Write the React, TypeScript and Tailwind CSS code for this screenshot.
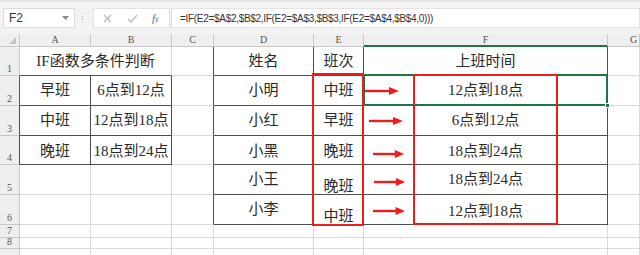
import React from "react";

function Arrow({ className }: { className: string }) {
  return (
    <svg className={"absolute h-[10px] " + className} viewBox="0 0 34 10" preserveAspectRatio="none">
      <line x1={0} y1={5} x2={26} y2={5} stroke="#ee1c1c" strokeWidth={2.4} />
      <polygon points="24,1 34,5 24,9" fill="#ee1c1c" />
    </svg>
  );
}

const cell =
  "flex items-center justify-center border-r border-b border-[#dadada] text-[15px] text-[#2a2a2a] leading-none";
const hdr =
  "flex items-center justify-center border-r border-b border-[#c9c9c9] bg-[#efefef] text-[10px] text-[#555] leading-none font-['Liberation_Serif',serif]";
const rh =
  "flex items-end justify-center pb-[1px] border-r border-b border-[#c9c9c9] bg-[#efefef] text-[10px] text-[#555] leading-none font-['Liberation_Serif',serif]";
const DR = " border-r-[#4d4d4d]";
const DB = " border-b-[#4d4d4d]";
const DRB = " border-r-[#4d4d4d] border-b-[#4d4d4d]";

export default function App() {
  return (
    <div className="relative w-[640px] h-[255px] overflow-hidden bg-white">
      {/* toolbar */}
      <div className="flex h-[34px] items-start bg-[#f3f3f3] border-t-[2px] border-[#e6e6e6] pt-[6px] pl-[3px]">
        <div className="flex h-[20px] w-[72px] items-center justify-between border border-[#dcdcdc] bg-white px-[5px] text-[12px] text-[#333] font-['Liberation_Sans',sans-serif]">
          <span>F2</span>
          <svg width="7" height="4" viewBox="0 0 7 4">
            <polygon points="0,0 7,0 3.5,4" fill="#8a8a8a" />
          </svg>
        </div>
        <div className="ml-[7px] mr-[10px] flex h-[20px] flex-col items-center justify-center gap-[2px]">
          <div className="h-[1px] w-[1px] bg-[#b0b0b0]" />
          <div className="h-[1px] w-[1px] bg-[#b0b0b0]" />
          <div className="h-[1px] w-[1px] bg-[#b0b0b0]" />
          <div className="h-[1px] w-[1px] bg-[#b0b0b0]" />
        </div>
        <div className="flex h-[20px] w-[77px] items-center border border-[#e2e2e2] bg-white pl-[8px]">
          <svg width="9" height="9" viewBox="0 0 9 9" className="ml-[1px]">
            <path d="M1 1 L8 8 M8 1 L1 8" stroke="#b8b8b8" strokeWidth="1.2" />
          </svg>
          <svg width="11" height="9" viewBox="0 0 11 9" className="ml-[15px]">
            <path d="M1 5 L4 8 L10 1" stroke="#b8b8b8" strokeWidth="1.2" fill="none" />
          </svg>
          <span className="ml-[14px] text-[11px] italic text-[#666] font-['Liberation_Serif',serif]">
            f<span className="text-[8px]">x</span>
          </span>
        </div>
        <div className="ml-[1px] flex h-[20px] flex-1 items-center border border-[#e2e2e2] bg-white pl-[8px] text-[10px] tracking-[-0.3px] text-[#333] font-['Liberation_Sans',sans-serif]">
          =IF(E2=$A$2,$B$2,IF(E2=$A$3,$B$3,IF(E2=$A$4,$B$4,0)))
        </div>
      </div>

      {/* sheet grid */}
      <div className="grid grid-cols-[20px_71px_81px_42px_100px_50px_244px_1fr] grid-rows-[13px_29px_30px_30px_29px_30px_30px_13px_11px_20px] font-['Liberation_Serif','Noto_Sans_CJK_SC',serif]">
        {/* header row */}
        <div className={hdr + " relative"}>
          <svg className="absolute right-[3px] bottom-[2px]" width="7" height="7" viewBox="0 0 7 7">
            <polygon points="7,0 7,7 0,7" fill="#c4c4c4" />
          </svg>
        </div>
        <div className={hdr}>A</div>
        <div className={hdr}>B</div>
        <div className={hdr}>C</div>
        <div className={hdr}>D</div>
        <div className={hdr}>E</div>
        <div className={hdr + " bg-[#d6d6d6] border-b-[2px] border-b-[#217346]"}>F</div>
        <div className={hdr + " justify-start pl-[22px]"}>G</div>

        {/* row 1 */}
        <div className={rh}>1</div>
        <div className={cell + " col-span-2" + DB}>IF函数多条件判断</div>
        <div className={cell + DR}></div>
        <div className={cell + DRB}>姓名</div>
        <div className={cell + DRB}>班次</div>
        <div className={cell + DRB}>上班时间</div>
        <div className={cell}></div>

        {/* row 2 */}
        <div className={rh + " bg-[#d6d6d6] border-r-[#217346]"}>2</div>
        <div className={cell + DRB}>早班</div>
        <div className={cell + DRB}>6点到12点</div>
        <div className={cell + DR}></div>
        <div className={cell + DRB}>小明</div>
        <div className={cell + DRB}>中班</div>
        <div className={cell + DRB + " relative"}>
          12点到18点
          <Arrow className="left-[1px] top-[10px] w-[34px]" />
        </div>
        <div className={cell}></div>

        {/* row 3 */}
        <div className={rh + DR}>3</div>
        <div className={cell + DRB}>中班</div>
        <div className={cell + DRB}>12点到18点</div>
        <div className={cell + DR}></div>
        <div className={cell + DRB}>小红</div>
        <div className={cell + DRB}>早班</div>
        <div className={cell + DRB + " relative"}>
          6点到12点
          <Arrow className="left-[5px] top-[10px] w-[34px]" />
        </div>
        <div className={cell}></div>

        {/* row 4 */}
        <div className={rh + DR}>4</div>
        <div className={cell + DRB + " pt-[3px]"}>晚班</div>
        <div className={cell + DRB + " pt-[3px]"}>18点到24点</div>
        <div className={cell + DR}></div>
        <div className={cell + DRB + " pt-[3px]"}>小黑</div>
        <div className={cell + DRB + " pt-[3px]"}>晚班</div>
        <div className={cell + DRB + " relative pt-[3px]"}>
          18点到24点
          <Arrow className="left-[9px] top-[13px] w-[31px]" />
        </div>
        <div className={cell}></div>

        {/* row 5 */}
        <div className={rh}>5</div>
        <div className={cell}></div>
        <div className={cell}></div>
        <div className={cell + DR}></div>
        <div className={cell + DRB}>小王</div>
        <div className={cell + DRB + " pt-[13px]"}>晚班</div>
        <div className={cell + DRB + " relative"}>
          18点到24点
          <Arrow className="left-[10px] top-[12px] w-[31px]" />
        </div>
        <div className={cell}></div>

        {/* row 6 */}
        <div className={rh}>6</div>
        <div className={cell}></div>
        <div className={cell}></div>
        <div className={cell + DR}></div>
        <div className={cell + DRB}>小李</div>
        <div className={cell + DRB + " pt-[13px]"}>中班</div>
        <div className={cell + DRB + " relative pt-[3px]"}>
          12点到18点
          <Arrow className="left-[9px] top-[11px] w-[32px]" />
        </div>
        <div className={cell}></div>

        {/* rows 7-9 */}
        {[7, 8, 9].map((n) => (
          <React.Fragment key={n}>
            <div className={rh}>{n}</div>
            <div className={cell}></div>
            <div className={cell}></div>
            <div className={cell}></div>
            <div className={cell}></div>
            <div className={cell}></div>
            <div className={cell}></div>
            <div className={cell}></div>
          </React.Fragment>
        ))}
      </div>

      {/* selection of F2 */}
      <div className="absolute left-[363px] top-[74px] h-[32px] w-[245px] border-2 border-[#217346]" />
      <div className="absolute left-[605px] top-[103px] h-[5px] w-[5px] border border-white bg-[#217346]" />

      {/* red annotation boxes */}
      <div className="absolute left-[312px] top-[73px] h-[153px] w-[52px] border-2 border-[#ee1c1c]" />
      <div className="absolute left-[413px] top-[74px] h-[151px] w-[145px] border-2 border-[#ee1c1c]" />
    </div>
  );
}
